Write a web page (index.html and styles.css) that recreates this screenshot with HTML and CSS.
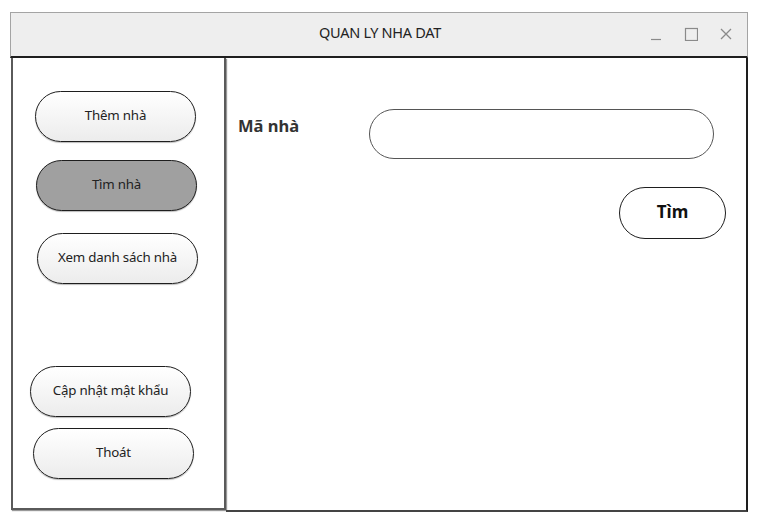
FILE: index.html
```html
<!DOCTYPE html>
<html lang="vi">
<head>
<meta charset="utf-8">
<title>QUAN LY NHA DAT</title>
<link rel="stylesheet" href="styles.css">
</head>
<body>
<div class="window">
  <div class="titlebar">
    <span class="title">QUAN LY NHA DAT</span>
    <div class="controls">
      <svg width="14" height="14" viewBox="0 0 14 14"><line x1="2" y1="12.5" x2="12" y2="12.5" stroke="#8a8a8a" stroke-width="1.2"/></svg>
      <svg width="14" height="14" viewBox="0 0 14 14"><rect x="1.5" y="1.5" width="12" height="12" fill="none" stroke="#8a8a8a" stroke-width="1.2"/></svg>
      <svg width="14" height="14" viewBox="0 0 14 14"><path d="M2 2 L12 12 M12 2 L2 12" stroke="#8a8a8a" stroke-width="1.3"/></svg>
    </div>
  </div>
  <div class="main">
    <div class="sidebar">
      <div class="btn b1">Thêm nhà</div>
      <div class="btn active b2">Tìm nhà</div>
      <div class="btn b3">Xem danh sách nhà</div>
      <div class="spacer"></div>
      <div class="btn b4">Cập nhật mật khẩu</div>
      <div class="btn b5">Thoát</div>
    </div>
    <div class="content">
      <div class="field-row">
        <label class="label">Mã nhà</label>
        <div class="input"></div>
      </div>
      <div class="action-row">
        <div class="search-btn">Tìm</div>
      </div>
    </div>
  </div>
</div>
</body>
</html>
```
FILE: styles.css
```css
* { box-sizing: border-box; }
html, body { margin: 0; padding: 0; background: #ffffff; }
body { font-family: "Noto Sans", "Open Sans", sans-serif; color: #222; }

.window {
  margin: 12px 0 0 10px;
  width: 738px;
}

.titlebar {
  position: relative;
  height: 46px;
  background: #eeeeee;
  border: 1px solid #a4a4a4;
  border-bottom: 2px solid #1e1e1e;
  display: flex;
  align-items: center;
  justify-content: center;
  padding-bottom: 5px;
}
.title {
  font-size: 14.5px;
  color: #222;
  letter-spacing: -0.3px;
  margin-left: 2px;
}
.controls {
  position: absolute;
  right: 14px;
  top: 14px;
  display: flex;
  gap: 21px;
}

.main {
  display: flex;
  height: 454px;
}

.sidebar {
  width: 215px;
  height: 452px;
  margin-left: 1px;
  border: 2px solid #5a5a5a;
  border-top: none;
  box-shadow: 1px 1px 1px #999;
  display: flex;
  flex-direction: column;
  align-items: flex-start;
  padding-top: 33px;
}
.spacer { flex: 0 0 82px; }

.btn {
  width: 161px;
  height: 51px;
  border: 1px solid #1e1e1e;
  border-radius: 26px;
  background: linear-gradient(#ffffff, #ececec);
  box-shadow: 0 1px 1px #bbb;
  display: flex;
  align-items: center;
  justify-content: center;
  padding-bottom: 3px;
  font-size: 13.3px;
  color: #222;
  letter-spacing: -0.2px;
}
.btn.active { background: #a0a0a0; }
.b1 { margin-left: 22px; }
.b2 { margin-left: 23px; margin-top: 18px; }
.b3 { margin-left: 24px; margin-top: 22px; }
.b4 { margin-left: 17px; }
.b5 { margin-left: 20px; margin-top: 11px; }

.content {
  flex: 1;
  border-right: 2px solid #1e1e1e;
  border-bottom: 2px solid #444;
  padding: 51px 20px 0 12px;
  display: flex;
  flex-direction: column;
}
.field-row {
  display: flex;
  align-items: flex-start;
}
.label {
  width: 131px;
  margin-top: 5px;
  font-size: 16.5px;
  font-weight: bold;
  color: #333;
}
.input {
  width: 345px;
  height: 50px;
  border: 1.5px solid #555;
  border-radius: 25px;
  background: #fff;
}
.action-row {
  display: flex;
  justify-content: flex-end;
  margin-top: 28px;
}
.search-btn {
  width: 107px;
  height: 52px;
  border: 1px solid #1e1e1e;
  border-radius: 26px;
  display: flex;
  align-items: center;
  justify-content: center;
  padding-bottom: 3px;
  font-size: 17px;
  font-weight: bold;
  color: #111;
}
```
